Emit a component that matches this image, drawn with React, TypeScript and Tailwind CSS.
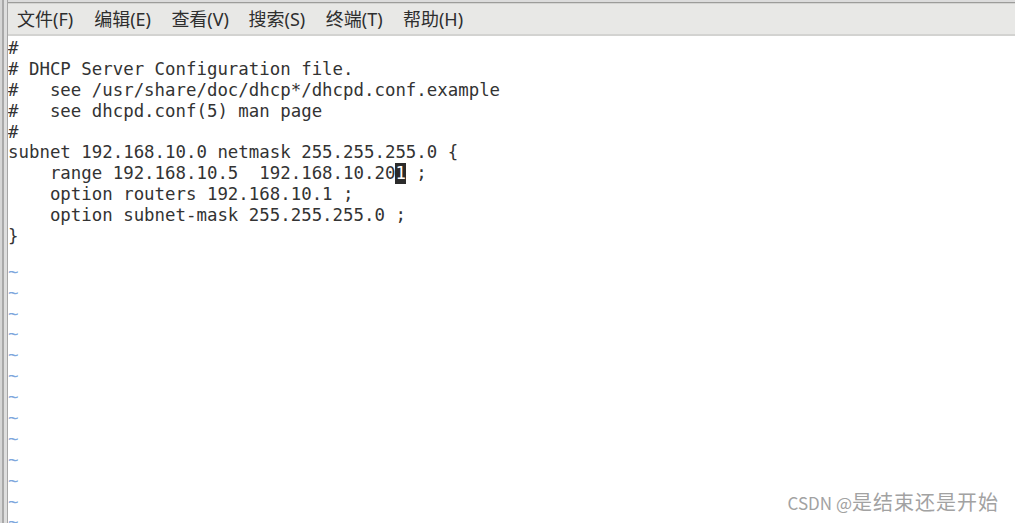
import React from "react";

const menus = ["文件(F)", "编辑(E)", "查看(V)", "搜索(S)", "终端(T)", "帮助(H)"];

const lines = [
  "#",
  "# DHCP Server Configuration file.",
  "#   see /usr/share/doc/dhcp*/dhcpd.conf.example",
  "#   see dhcpd.conf(5) man page",
  "#",
  "subnet 192.168.10.0 netmask 255.255.255.0 {",
  "CURSOR",
  "    option routers 192.168.10.1 ;",
  "    option subnet-mask 255.255.255.0 ;",
  "}",
  "",
];

const mono = { fontFamily: '"DejaVu Sans Mono", "Liberation Mono", monospace' };

const App: React.FC = () => {
  return (
    <div className="w-[1015px] h-[523px] overflow-hidden bg-white flex relative">
      {/* window left edge */}
      <div className="flex h-full shrink-0">
        <div className="w-[2px] bg-[#d6d6d6]" />
        <div className="w-[2px] bg-[#a9a9a9]" />
        <div className="w-[3px] bg-[#dedede]" />
        <div className="w-[1px] bg-[#a6a6a6]" />
      </div>

      <div className="flex-1 flex flex-col min-w-0 overflow-hidden">
        {/* top edge + menu bar */}
        <div className="h-[2px] shrink-0 bg-[#dcdcdc]" />
        <div className="h-[1px] shrink-0 bg-[#9c9c9a]" />
        <div className="h-[1px] shrink-0 bg-[#d4d4d2]" />
        <div
          className="h-[30px] shrink-0 bg-[#e8e8e6] flex items-center pl-[9px] text-[18px] text-[#2e2e2e]"
          style={{ fontFamily: '"Noto Sans", "Noto Sans CJK SC", sans-serif' }}
        >
          {menus.map((m) => (
            <span key={m} className="w-[77.2px] shrink-0 whitespace-nowrap leading-none">
              {m}
            </span>
          ))}
        </div>
        <div className="h-[2px] shrink-0 bg-[#d3d3d1]" />

        {/* vim buffer */}
        <div
          className="shrink-0 pt-[2px] text-[17.4px] leading-[20.9px] text-[#333333] whitespace-pre"
          style={mono}
        >
          {lines.map((l, i) =>
            l === "CURSOR" ? (
              <div key={i} className="h-[20.9px]">
                {"    range 192.168.10.5  192.168.10.20"}
                <span className="inline-block h-[20.9px] align-top bg-[#2b2b2b] text-white">1</span>
                {" ;"}
              </div>
            ) : (
              <div key={i} className="h-[20.9px]">
                {l}
              </div>
            )
          )}
          {Array.from({ length: 13 }).map((_, i) => (
            <div key={"t" + i} className="h-[20.9px] text-[#7fa7dd]">
              <span className="inline-block -translate-y-[6px]">~</span>
            </div>
          ))}
        </div>
      </div>

      {/* watermark */}
      <div
        className="absolute right-[16px] bottom-[6px] flex items-baseline text-[#a2a2a2] whitespace-nowrap"
        style={{ fontFamily: '"Noto Sans CJK SC", sans-serif' }}
      >
        <span className="text-[17px]">CSDN @</span>
        <span className="text-[20px] tracking-[1px]">是结束还是开始</span>
      </div>
    </div>
  );
};

export default App;
